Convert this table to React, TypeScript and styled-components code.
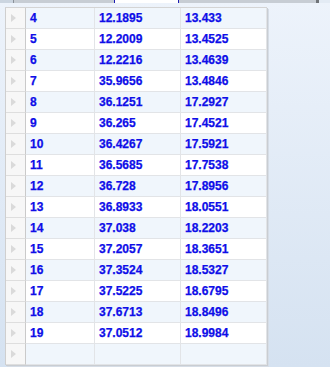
import { Fragment } from "react";
import styled, { createGlobalStyle } from "styled-components";

const GlobalStyle = createGlobalStyle`
  html, body {
    margin: 0;
    padding: 0;
  }
  body {
    font-family: "Liberation Sans", Arial, sans-serif;
  }
`;

const Page = styled.div`
  width: 330px;
  height: 367px;
  overflow: hidden;
  display: flex;
  flex-direction: column;
  background: linear-gradient(#edf3fb, #d5e2f1);
`;

const TopStrip = styled.div`
  height: 3px;
  display: flex;
  flex-shrink: 0;
`;

const StripPart = styled.div<{ $w?: number; $tone?: string }>`
  width: ${(p) => (p.$w ? `${p.$w}px` : "auto")};
  flex: ${(p) => (p.$w ? "none" : "1")};
  background: ${(p) => p.$tone ?? "#c7cdd4"};
`;

const Tab = styled.div`
  width: 63px;
  background: #ffffff;
  border-left: 1px solid #1c1cb4;
  border-right: 1px solid #1c1cb4;
`;

const Body = styled.div`
  padding: 4px 0 0 5px;
`;

const Grid = styled.div`
  display: grid;
  grid-template-columns: 20px 69px 86px 86px;
  width: 261px;
  border-top: 1px solid #d4d4d4;
  border-left: 1px solid #cfcfcf;
  box-shadow: 1px 1px 0 #c9cdd2, 2px 2px 0 #d6dde6;
`;

const Cell = styled.div<{ $alt: boolean }>`
  height: 20px;
  border-right: 1px solid #e2e4e7;
  border-bottom: 1px solid #e2e4e7;
  background: ${(p) => (p.$alt ? "#f0f6fc" : "#ffffff")};
  color: #0e0ee8;
  font-weight: bold;
  font-size: 12px;
  line-height: 20px;
  padding-left: 4px;
  white-space: nowrap;
  -webkit-text-stroke: 0.25px #0e0ee8;
`;

const RowHead = styled.div`
  height: 20px;
  border-right: 1px solid #cacaca;
  border-bottom: 1px solid #dedede;
  background: #f7f7f7;
  display: flex;
  align-items: center;
  padding-left: 5px;
`;

const Arrow = styled.span`
  width: 0;
  height: 0;
  border-top: 4px solid transparent;
  border-bottom: 4px solid transparent;
  border-left: 5px solid #dadada;
`;

const rows: [string, string, string][] = [
  ["4", "12.1895", "13.433"],
  ["5", "12.2009", "13.4525"],
  ["6", "12.2216", "13.4639"],
  ["7", "35.9656", "13.4846"],
  ["8", "36.1251", "17.2927"],
  ["9", "36.265", "17.4521"],
  ["10", "36.4267", "17.5921"],
  ["11", "36.5685", "17.7538"],
  ["12", "36.728", "17.8956"],
  ["13", "36.8933", "18.0551"],
  ["14", "37.038", "18.2203"],
  ["15", "37.2057", "18.3651"],
  ["16", "37.3524", "18.5327"],
  ["17", "37.5225", "18.6795"],
  ["18", "37.6713", "18.8496"],
  ["19", "37.0512", "18.9984"],
  ["", "", ""],
];

const App = () => {
  return (
    <Page>
      <GlobalStyle />
      <TopStrip>
        <StripPart $w={13} $tone="#cbd5e0" />
        <StripPart $w={1} $tone="#8a9199" />
        <StripPart $w={100} />
        <Tab />
        <StripPart />
        <StripPart $w={3} $tone="#6f7378" />
        <StripPart $w={11} $tone="#e3ebf4" />
      </TopStrip>
      <Body>
        <Grid>
          {rows.map((r, i) => (
            <Fragment key={i}>
              <RowHead>
                <Arrow />
              </RowHead>
              {r.map((v, j) => (
                <Cell key={j} $alt={i % 2 === 0}>
                  {v}
                </Cell>
              ))}
            </Fragment>
          ))}
        </Grid>
      </Body>
    </Page>
  );
};

export default App;
